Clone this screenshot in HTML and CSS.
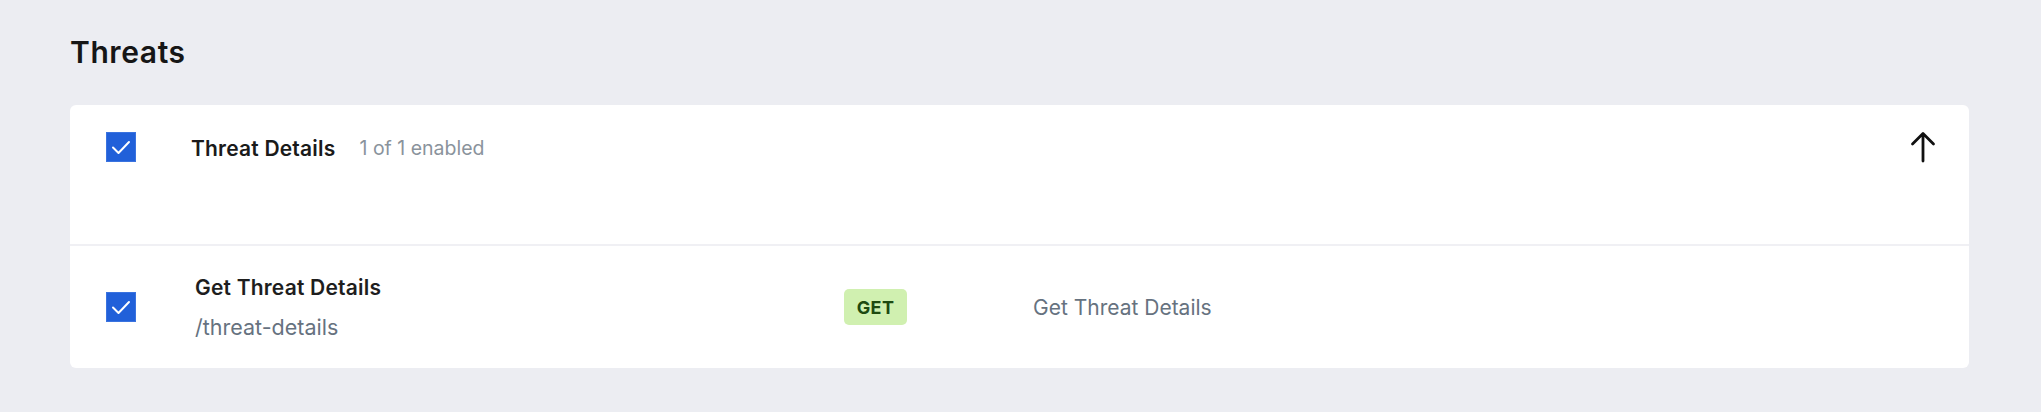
FILE: index.html
```html
<!DOCTYPE html>
<html lang="en">
<head>
<meta charset="utf-8">
<title>Threats</title>
<link rel="stylesheet" href="styles.css">
</head>
<body>
<main class="page">
  <h1 class="title">Threats</h1>
  <section class="card">
    <div class="group">
      <div class="group-head">
        <span class="checkbox"><svg viewBox="0 0 30 30" width="30" height="30"><path d="M7 15.5 L12.5 21 L23 10" fill="none" stroke="#fff" stroke-width="2" stroke-linecap="round" stroke-linejoin="round"/></svg></span>
        <span class="group-name">Threat Details</span>
        <span class="group-count">1 of 1 enabled</span>
        <span class="toggle"><svg viewBox="0 0 26 32" width="26" height="32"><path d="M13 30 V3 M2.5 13 L13 2.5 L23.5 13" fill="none" stroke="#111" stroke-width="2.8" stroke-linecap="round" stroke-linejoin="round"/></svg></span>
      </div>
    </div>
    <div class="endpoint">
      <span class="checkbox"><svg viewBox="0 0 30 30" width="30" height="30"><path d="M7 15.5 L12.5 21 L23 10" fill="none" stroke="#fff" stroke-width="2" stroke-linecap="round" stroke-linejoin="round"/></svg></span>
      <div class="endpoint-info">
        <div class="endpoint-name">Get Threat Details</div>
        <div class="endpoint-path">/threat-details</div>
      </div>
      <div class="method-cell"><span class="method">GET</span></div>
      <div class="endpoint-desc">Get Threat Details</div>
    </div>
  </section>
</main>
</body>
</html>
```

FILE: styles.css
```css
* { box-sizing: border-box; }

html, body {
  margin: 0;
  padding: 0;
  background: #ecedf2;
  font-family: Inter, "Noto Sans", "Liberation Sans", sans-serif;
  color: #1a1a1a;
}

.page {
  padding: 35px 72px 0 70px;
}

.title {
  margin: 0 0 36px 0;
  font-size: 30px;
  line-height: 34px;
  font-weight: 600;
  color: #161616;
  letter-spacing: 0.6px;
}

.card {
  background: #fff;
  border-radius: 6px;
  overflow: hidden;
}

.group {
  padding: 27px 33px 82px 36px;
  border-bottom: 2px solid #f0f0f4;
}

.group-head {
  display: flex;
  align-items: center;
  height: 30px;
}

.checkbox {
  flex: none;
  width: 30px;
  height: 30px;
  background: #2160d9;
  border: 1px solid #3a73df;
  display: flex;
  align-items: center;
  justify-content: center;
}

.checkbox svg { display: block; margin: -1px; }

.group-name {
  margin-left: 55px;
  padding-top: 2px;
  font-size: 21px;
  font-weight: 600;
  letter-spacing: 0.2px;
  color: #1a1a1a;
}

.group-count {
  margin-left: 24px;
  padding-top: 2px;
  font-size: 19.5px;
  color: #8a939c;
}

.toggle {
  margin-left: auto;
  display: flex;
  align-items: center;
}

.toggle svg { display: block; }

.endpoint {
  display: grid;
  grid-template-columns: 30px 708px 189px 1fr;
  align-items: center;
  height: 122px;
  padding-left: 36px;
}

.endpoint-info {
  margin-left: 59px;
  display: flex;
  flex-direction: column;
  gap: 11px;
}

.endpoint-name {
  font-size: 21px;
  line-height: 28px;
  font-weight: 600;
  letter-spacing: 0.2px;
  color: #1e1e1e;
}

.endpoint-path {
  font-size: 21.5px;
  line-height: 28px;
  color: #66727f;
}

.method-cell {
  display: flex;
}

.method {
  display: inline-flex;
  align-items: center;
  justify-content: center;
  width: 63px;
  height: 36px;
  border-radius: 5px;
  background: #d0f0b0;
  color: #1d4a10;
  font-size: 18px;
  font-weight: 700;
  letter-spacing: 0.4px;
}

.endpoint-desc {
  font-size: 21px;
  color: #66727f;
}
```
